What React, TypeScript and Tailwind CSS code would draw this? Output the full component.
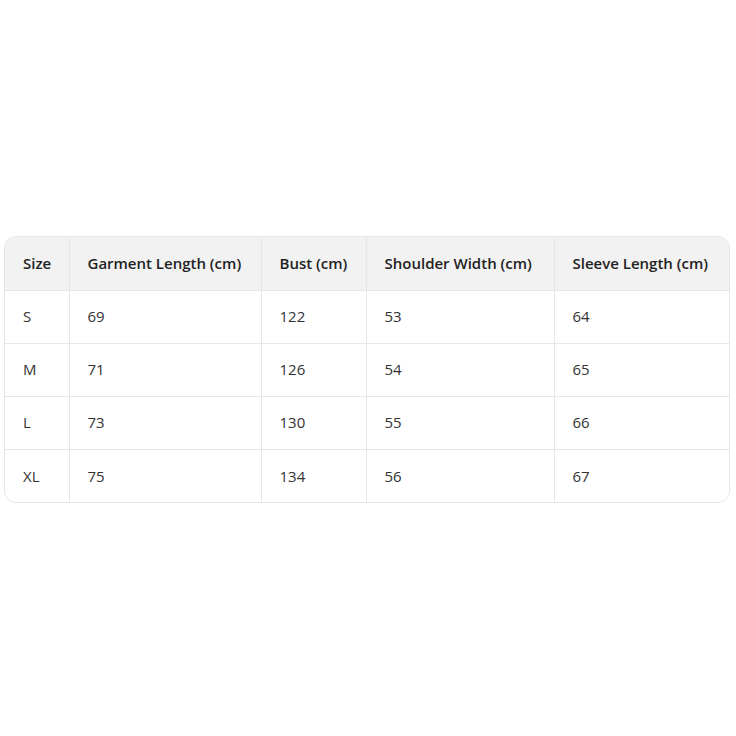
const headers = ["Size", "Garment Length (cm)", "Bust (cm)", "Shoulder Width (cm)", "Sleeve Length (cm)"];

const rows = [
    ["S", "69", "122", "53", "64"],
    ["M", "71", "126", "54", "65"],
    ["L", "73", "130", "55", "66"],
    ["XL", "75", "134", "56", "67"],
];

export default function App() {
    return (
        <div className="w-[736px] h-[736px] bg-white flex items-center justify-center pl-1 pr-[6px] pt-[3px] font-['Open_Sans',sans-serif]">
            <div className="w-full border border-[#e6e6e6] rounded-xl overflow-hidden">
                <table className="w-full table-fixed border-collapse text-[15px]">
                    <colgroup>
                        <col className="w-[64px]" />
                        <col className="w-[192px]" />
                        <col className="w-[105px]" />
                        <col className="w-[188px]" />
                        <col />
                    </colgroup>
                    <thead>
                        <tr className="bg-[#f2f2f2] h-[53px]">
                            {headers.map((h, i) => (
                                <th
                                    key={h}
                                    className={`text-left font-semibold text-[#222] pl-[18px] ${i > 0 ? "border-l border-[#e6e6e6]" : ""}`}
                                >
                                    {h}
                                </th>
                            ))}
                        </tr>
                    </thead>
                    <tbody>
                        {rows.map((r) => (
                            <tr key={r[0]} className="h-[53px] border-t border-[#e6e6e6]">
                                {r.map((c, i) => (
                                    <td
                                        key={i}
                                        className={`text-[#333] pl-[18px] ${i > 0 ? "border-l border-[#e6e6e6]" : ""}`}
                                    >
                                        {c}
                                    </td>
                                ))}
                            </tr>
                        ))}
                    </tbody>
                </table>
            </div>
        </div>
    );
}
